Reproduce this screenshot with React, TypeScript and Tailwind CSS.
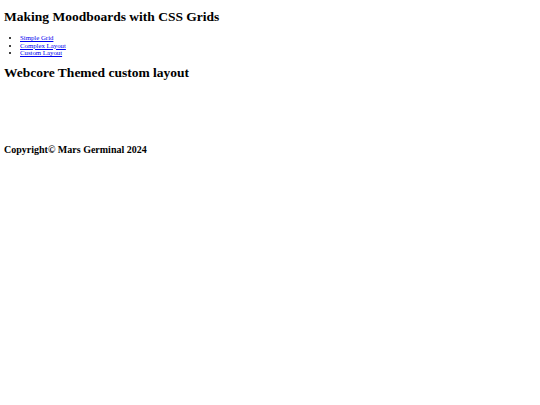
import React from "react";

const links = ["Simple Grid", "Complex Layout", "Custom Layout"];

export default function App() {
  return (
    <div className="min-h-[405px] bg-white px-[4px] text-black font-['Liberation_Serif',serif]">
      <h1 className="pt-[9px] text-[13.5px] leading-[15px] font-bold">
        Making Moodboards with CSS Grids
      </h1>

      <ul className="mt-[10px] list-disc pl-[16px] text-[6.8px] leading-[7.5px]">
        {links.map((l) => (
          <li key={l}>
            <a href="#" className="text-[#0000ee] underline">
              {l}
            </a>
          </li>
        ))}
      </ul>

      <h2 className="mt-[9px] text-[13.5px] leading-[14px] font-bold">
        Webcore Themed custom layout
      </h2>

      <div className="h-[65px]" />

      <p className="text-[10px] leading-[10px] font-bold">Copyright© Mars Germinal 2024</p>
    </div>
  );
}
